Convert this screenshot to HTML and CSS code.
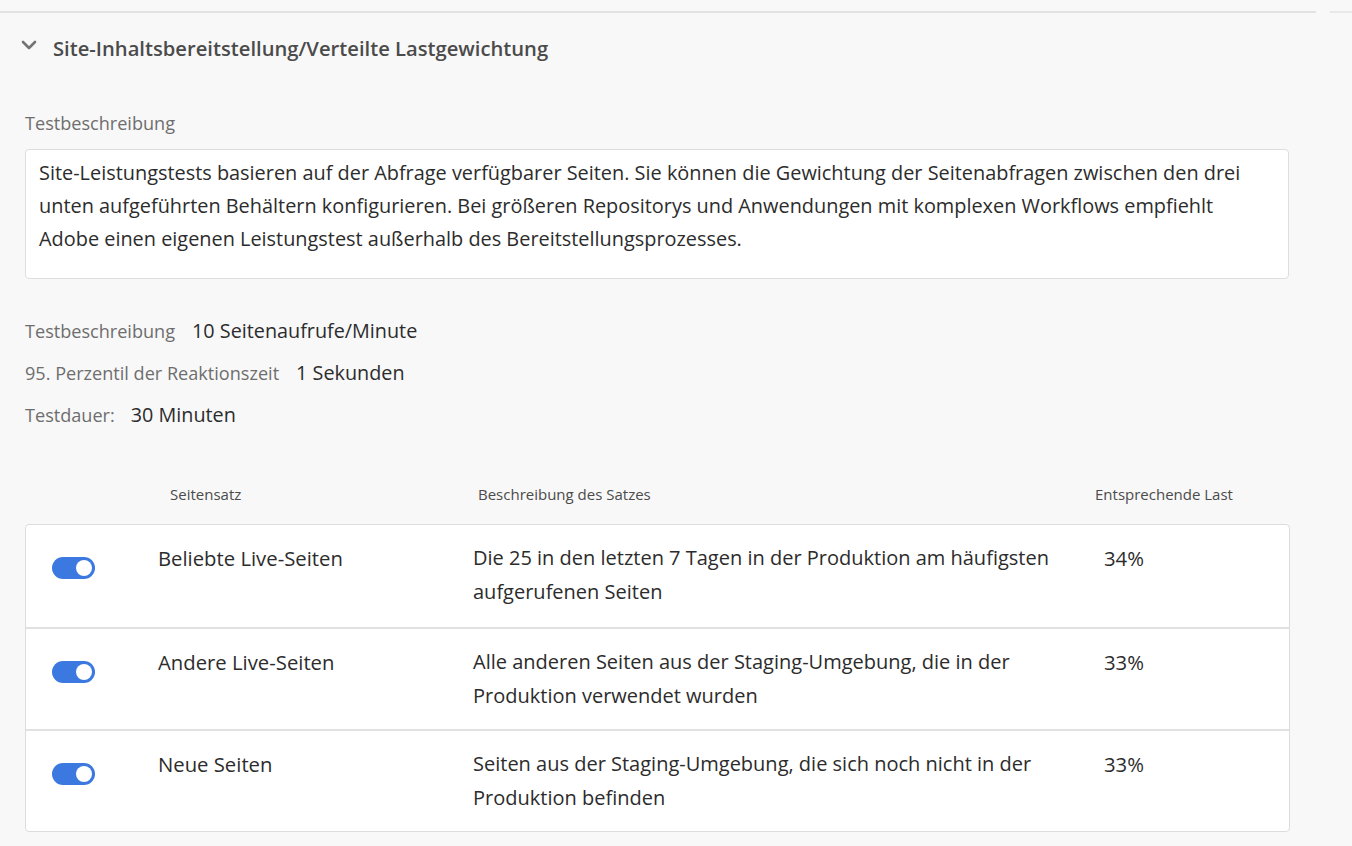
FILE: index.html
```html
<!DOCTYPE html>
<html lang="de">
<head>
<meta charset="utf-8">
<link rel="stylesheet" href="styles.css">
</head>
<body>
<div class="topbar"><div class="topline"></div><div class="topline-short"></div></div>
<section class="panel">
  <header class="panel-head">
    <svg class="chevron" width="16" height="10" viewBox="0 0 16 10"><path d="M2 2 L8 8 L14 2" fill="none" stroke="#747474" stroke-width="2.6" stroke-linecap="round" stroke-linejoin="round"/></svg>
    <h2 class="panel-title">Site-Inhaltsbereitstellung/Verteilte Lastgewichtung</h2>
  </header>
  <div class="field-label">Testbeschreibung</div>
  <div class="desc-box">Site-Leistungstests basieren auf der Abfrage verfügbarer Seiten. Sie können die Gewichtung der Seitenabfragen zwischen den drei unten aufgeführten Behältern konfigurieren. Bei größeren Repositorys und Anwendungen mit komplexen Workflows empfiehlt Adobe einen eigenen Leistungstest außerhalb des Bereitstellungsprozesses.</div>
  <div class="meta">
    <div class="meta-row"><span class="meta-label">Testbeschreibung</span><span class="meta-value">10 Seitenaufrufe/Minute</span></div>
    <div class="meta-row"><span class="meta-label">95. Perzentil der Reaktionszeit</span><span class="meta-value">1 Sekunden</span></div>
    <div class="meta-row"><span class="meta-label">Testdauer:</span><span class="meta-value">30 Minuten</span></div>
  </div>
  <div class="thead">
    <span class="th th-name">Seitensatz</span>
    <span class="th th-desc">Beschreibung des Satzes</span>
    <span class="th th-load">Entsprechende Last</span>
  </div>
  <div class="table">
    <div class="row">
      <div class="cell-toggle"><span class="toggle"><span class="knob"></span></span></div>
      <div class="cell-name">Beliebte Live-Seiten</div>
      <div class="cell-desc">Die 25 in den letzten 7 Tagen in der Produktion am häufigsten aufgerufenen Seiten</div>
      <div class="cell-load">34%</div>
    </div>
    <div class="row">
      <div class="cell-toggle"><span class="toggle"><span class="knob"></span></span></div>
      <div class="cell-name">Andere Live-Seiten</div>
      <div class="cell-desc">Alle anderen Seiten aus der Staging-Umgebung, die in der Produktion verwendet wurden</div>
      <div class="cell-load">33%</div>
    </div>
    <div class="row">
      <div class="cell-toggle"><span class="toggle"><span class="knob"></span></span></div>
      <div class="cell-name">Neue Seiten</div>
      <div class="cell-desc">Seiten aus der Staging-Umgebung, die sich noch nicht in der Produktion befinden</div>
      <div class="cell-load">33%</div>
    </div>
  </div>
</section>
</body>
</html>
```
FILE: styles.css
```css
* { box-sizing: border-box; }
html, body { margin: 0; padding: 0; }
body {
  background: #f8f8f8;
  font-family: "Open Sans", "Noto Sans", sans-serif;
  color: #2c2c2c;
  width: 1352px;
  height: 846px;
  overflow: hidden;
}
.topbar {
  display: flex;
  gap: 14px;
  padding-top: 11px;
}
.topline { width: 1316px; height: 2px; background: #e2e2e2; }
.topline-short { width: 22px; height: 2px; background: #e8e8e8; }
.panel { padding: 0 63px 0 25px; }
.panel-head {
  display: flex;
  align-items: center;
  height: 70px;
  margin-left: -4px;
}
.chevron { margin-right: 16px; margin-top: -6px; }
.panel-title {
  margin: 0;
  font-size: 20.2px;
  font-weight: 600;
  color: #4b4b4b;
}
.field-label {
  margin-top: 28px;
  font-size: 18.1px;
  color: #6e6e6e;
  line-height: 24px;
}
.desc-box {
  margin-top: 14px;
  background: #fff;
  border: 1px solid #dedede;
  border-radius: 4px;
  height: 130px;
  padding: 6px 13px;
  font-size: 19.9px;
  line-height: 33px;
  color: #2c2c2c;
}
.meta {
  margin-top: 37px;
  display: flex;
  flex-direction: column;
  gap: 12px;
}
.meta-row {
  display: flex;
  align-items: baseline;
  gap: 17px;
  height: 30px;
  line-height: 30px;
}
.meta-row:nth-child(2) { gap: 17px; }
.meta-row:nth-child(3) { gap: 16px; }
.meta-label { font-size: 18.1px; color: #6e6e6e; }
.meta-value { font-size: 19.8px; color: #2c2c2c; }
.thead {
  margin-top: 54px;
  display: flex;
  height: 40px;
  font-size: 15px;
  color: #4b4b4b;
}
.th-name { margin-left: 145px; width: 308px; }
.th-desc { width: 617px; }
.table {
  background: #fff;
  border: 1px solid #dcdcdc;
  border-radius: 4px;
  width: 1265px;
}
.row {
  display: flex;
  height: 102px;
  padding-top: 16px;
  font-size: 20.3px;
  line-height: 34px;
  color: #2c2c2c;
}
.row + .row { border-top: 2px solid #e1e1e1; }
.cell-toggle { width: 132px; padding-left: 26px; padding-top: 16px; }
.toggle {
  display: flex;
  align-items: center;
  justify-content: flex-end;
  width: 43px;
  height: 22px;
  border-radius: 11px;
  background: #3b78e0;
  padding-right: 3px;
}
.knob {
  width: 16px;
  height: 16px;
  border-radius: 50%;
  background: #fff;
}
.cell-name { width: 315px; }
.cell-desc { width: 620px; font-size: 20px; }
.cell-load { padding-left: 11px; }
```
